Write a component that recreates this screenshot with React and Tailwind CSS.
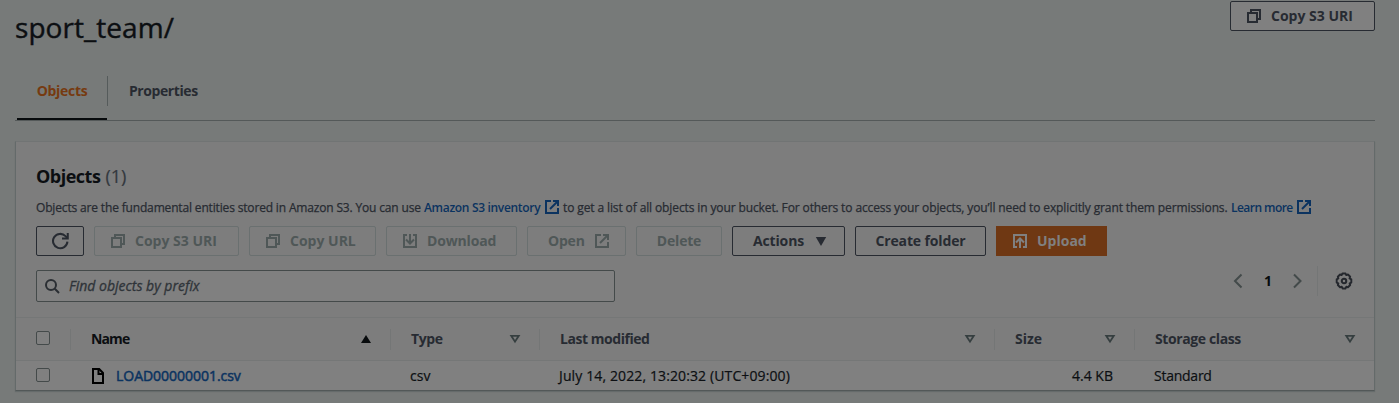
import React from "react";

function Svg({ className = "", children, size = 16 }) {
  return (
    <svg className={`shrink-0 ${className}`} width={size} height={size} viewBox="0 0 16 16" fill="none" stroke="currentColor" strokeWidth="2">
      {children}
    </svg>
  );
}
const CopyIcon = () => (
  <Svg><path d="M2 5h9v9H2z" /><path d="M5 5V2h9v9h-3" /></Svg>
);
const ExternalIcon = ({ className }) => (
  <Svg className={className}><path d="M14 9v5H2V2h5" /><path d="M9 2h5v5" /><path d="M14 2L6 10" /></Svg>
);
const DownloadIcon = () => (
  <Svg><path d="M5 2H2v12h12V2h-3" /><path d="M8 1v9" /><path d="M4 6.5l4 4 4-4" /></Svg>
);
const UploadIcon = () => (
  <Svg><path d="M5 14H2V2h12v12h-3" /><path d="M8 15V6" /><path d="M4 9.5l4-4 4 4" /></Svg>
);
const RefreshIcon = () => (
  <Svg size={18}><path strokeWidth="1.8" d="M14.6 8.6A6.4 6.4 0 1 1 12.9 3.7L14.3 5.2" /><path strokeWidth="1.8" d="M14.9 .8V5.7H9.8" /></Svg>
);
const SearchIcon = () => (
  <Svg className="text-[#2a2e33]"><circle cx="7" cy="7" r="5" /><path d="M10.8 10.8L15 15" /></Svg>
);
const FileIcon = () => (
  <Svg className="text-black"><path d="M3 1h6.2L13 5v10H3z" /><path d="M8.5 1v5H13" /></Svg>
);
const Chevron = ({ d }) => (
  <Svg className="text-[#434a4a]"><path d={d} /></Svg>
);
const GearIcon = () => (
  <Svg size={18} className="text-[#24272d]">
    <path strokeWidth="1.7" strokeLinejoin="round" d="M6.6 1.4h2.8l.6 1.3 1.5-.5 2 2-.6 1.4 1.6.9v2.9l-1.5.7.5 1.5-2 2-1.4-.5-.8 1.5H6.7L6 13.1l-1.5.5-2-2 .5-1.5-1.5-.7V6.5l1.5-.8-.5-1.5 2-2 1.4.5z" />
    <circle cx="8" cy="8" r="2" strokeWidth="1.8" />
  </Svg>
);
const SortIcon = () => (
  <Svg className="text-[#363f40]" size={12}><path strokeWidth="2.4" d="M3 3.8h10L8 11.6z" /></Svg>
);

function Button({ className = "", disabled = false, children }) {
  const tone = disabled ? "border-[#6a7070] text-[#4f5757]" : "border-[#272b32] text-[#272b32]";
  return (
    <button className={`flex h-[30px] shrink-0 items-center whitespace-nowrap rounded-[2px] border text-[14px] leading-[20px] font-bold ${tone} ${className}`}>
      {children}
    </button>
  );
}

const Divider = ({ className = "" }) => <span className={`w-px shrink-0 bg-[#747676] ${className}`} />;

function HeaderCell({ className = "", labelClass = "", label }) {
  return (
    <div className={`flex h-full shrink-0 items-center ${className}`}>
      <Divider className="h-[21px]" />
      <span className={`ml-[20px] flex-1 whitespace-nowrap ${labelClass}`}>{label}</span>
      <SortIcon />
    </div>
  );
}

const Checkbox = () => <span className="mb-[2px] h-[14px] w-[14px] shrink-0 rounded-[2px] border border-[#444a4a] bg-[#808080]" />;

export default function App() {
  return (
    <div className="h-[403px] w-[1399px] overflow-hidden bg-[#777a79] pl-[15px] font-['Open_Sans','Noto_Sans',sans-serif] text-[14px] leading-[20px] text-[#0c0f12]">
      <header className="flex h-[75px] w-[1360px] items-start justify-between">
        <h1 className="mt-[9px] text-[28px] leading-[36px] tracking-[0.05px] [-webkit-text-stroke:0.4px]">sport_team/</h1>
        <Button className="mt-px w-[145px] gap-[9px] bg-[#808080] pl-[15px]"><CopyIcon />Copy S3 URI</Button>
      </header>

      <nav className="flex h-[46px] w-[1360px] items-start border-b border-[#545959] pl-[2px] font-bold">
        <div className="flex h-[45px] w-[90px] justify-center border-b-2 border-[#080b0d] pt-[6px] text-[#763a10] tracking-[-0.3px]">Objects</div>
        <span className="mt-[1px] h-[30px] w-px bg-[#555b5b]" />
        <div className="pt-[6px] pl-[21px] text-[#272b32] tracking-[-0.42px]">Properties</div>
      </nav>

      <section className="mt-[20px] h-[250px] w-[1360px] border border-t-[#717474] border-r-[#646a6a] border-b-[#525858] border-l-[#646a6a] bg-[#7d7d7d] shadow-[0_1px_1px_0_#656b6b]">
        <div className="h-[175px] pl-[20px]">
          <h2 className="flex gap-[5px] pt-[23px] text-[18px] leading-[22px]">
            <span className="font-bold text-[#0b0e11] tracking-[-0.5px]">Objects</span>
            <span className="text-[#33383e] [-webkit-text-stroke:0.2px]">(1)</span>
          </h2>
          <p className="mt-[12px] flex h-[17px] items-center whitespace-nowrap pt-px text-[12px] leading-[16px] text-[#272b32]">
            <span className="w-[388px] tracking-[-0.16px] [-webkit-text-stroke:0.25px]">Objects are the fundamental entities stored in Amazon S3. You can use</span>
            <a className="flex w-[139px] items-center justify-between pr-[3px] font-semibold text-[#0b3360] tracking-[-0.32px]">Amazon S3 inventory<ExternalIcon className="-mt-[3px]" /></a>
            <span className="w-[668px] tracking-[-0.115px] [-webkit-text-stroke:0.25px]">to get a list of all objects in your bucket. For others to access your objects, you’ll need to explicitly grant them permissions.</span>
            <a className="flex w-[81px] items-center justify-between font-semibold text-[#0b3360] tracking-[-0.55px]">Learn more<ExternalIcon className="-mt-[3px]" /></a>
          </p>
          <div className="mt-[10px] flex gap-[10px]">
            <Button className="w-[48px] justify-center"><RefreshIcon /></Button>
            <Button disabled className="w-[145px] gap-[9px] pl-[15px]"><CopyIcon />Copy S3 URI</Button>
            <Button disabled className="w-[127px] gap-[9px] pl-[15px]"><CopyIcon />Copy URL</Button>
            <Button disabled className="w-[131px] gap-[9px] pl-[15px] tracking-[-0.15px]"><DownloadIcon />Download</Button>
            <Button disabled className="w-[99px] gap-[9px] pl-[20px] tracking-[-0.2px]">Open<ExternalIcon /></Button>
            <Button disabled className="w-[86px] justify-center tracking-[-0.2px]">Delete</Button>
            <Button className="w-[113px] gap-[11px] pl-[20px] tracking-[-0.15px]">Actions
              <svg width="12" height="9" viewBox="0 0 12 9"><path d="M.8 0h10.4L6 9z" fill="currentColor" /></svg>
            </Button>
            <Button className="w-[131px] justify-center tracking-[-0.13px]">Create folder</Button>
            <button className="flex h-[30px] w-[111px] items-center gap-[9px] bg-[#6f3813] pl-[16px] font-bold text-[#808080]"><UploadIcon />Upload</button>
          </div>
          <div className="mt-[14px] flex items-start justify-between">
            <div className="flex h-[32px] w-[579px] items-center gap-[9px] rounded-[2px] border border-[#444a4a] bg-[#808080] pl-[7px]">
              <SearchIcon />
              <span className="italic text-[#2f3439] [-webkit-text-stroke:0.3px]">Find objects by prefix</span>
            </div>
            <div className="-mt-[4px] flex h-[30px] items-center pr-[21px]">
              <Chevron d="M11.500 1.500L5 8l6.500 6.500" />
              <span className="w-[43px] pl-px text-center font-bold text-[#080b0d]">1</span>
              <Chevron d="M5 1.500L11.500 8 5 14.500" />
              <Divider className="mr-[17px] ml-[12px] h-[30px]" />
              <GearIcon />
            </div>
          </div>
        </div>

        <div className="flex h-[44px] items-center border-y border-[#757777] pl-[20px] font-bold text-[#272b32]">
          <Checkbox />
          <div className="ml-[20px] flex h-full w-[320px] items-center">
            <Divider className="h-[21px]" />
            <span className="ml-[20px] flex-1 text-[#0b0e11] tracking-[-0.9px]">Name</span>
            <svg className="mr-[19px]" width="10" height="8" viewBox="0 0 10 8"><path d="M5 0l5 8H0z" fill="#080b0d" /></svg>
          </div>
          <HeaderCell className="w-[149px] pr-[18px]" label="Type" labelClass="tracking-[-0.4px]" />
          <HeaderCell className="w-[455px] pr-[18px]" label="Last modified" labelClass="tracking-[-0.46px]" />
          <HeaderCell className="w-[140px] pr-[18px]" label="Size" />
          <HeaderCell className="w-[240px] pr-[18px]" label="Storage class" labelClass="tracking-[-0.39px]" />
        </div>

        <div className="flex h-[29px] items-center whitespace-nowrap bg-[#808080] pl-[20px] [-webkit-text-stroke:0.2px]">
          <Checkbox />
          <span className="ml-[40px] flex w-[320px] items-center gap-[10px] text-[#0b3360]">
            <FileIcon /><span className="tracking-[-0.03px] [-webkit-text-stroke:0.5px]">LOAD00000001.csv</span>
          </span>
          <span className="w-[149px]">csv</span>
          <span className="w-[434px] tracking-[0.12px]">July 14, 2022, 13:20:32 (UTC+09:00)</span>
          <span className="w-[120px] text-right">4.4 KB</span>
          <span className="ml-[41px] tracking-[-0.25px]">Standard</span>
        </div>
      </section>
    </div>
  );
}
